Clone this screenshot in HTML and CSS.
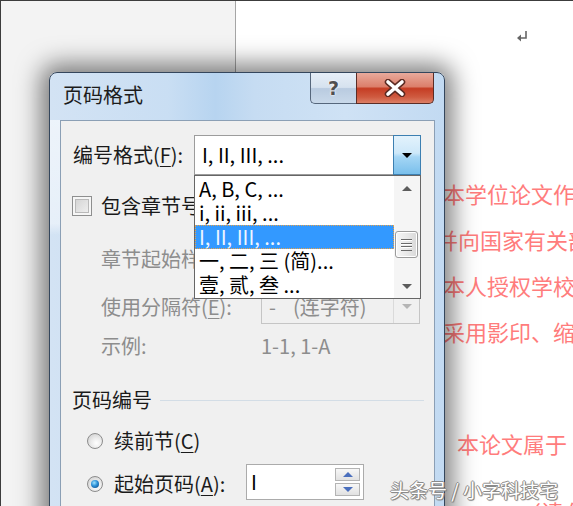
FILE: index.html
```html
<!DOCTYPE html>
<html lang="zh-CN">
<head>
  <meta charset="UTF-8" />
  <meta name="viewport" content="width=device-width, initial-scale=1.0"/>
  <title>页码格式</title>
  <link rel="stylesheet" href="styles.css">
</head>
<body>
  <div class="screen">
    <div class="gutter"></div>
    <div class="page">
      <div class="para-mark">
        <svg width="12" height="12" viewBox="0 0 12 12">
          <path d="M10 1 V8 H4" fill="none" stroke="#666" stroke-width="1.6"/>
          <path d="M1 8 L5 4.5 L5 11.5 Z" fill="#666"/>
        </svg>
      </div>
      <div class="red-text">
        <p class="line">本学位论文作者完全了解</p>
        <p class="line shift">保留并向国家有关部门</p>
        <p class="line">本人授权学校可以将本</p>
        <p class="line">采用影印、缩印或扫描</p>
        <p class="line indent">本论文属于</p>
        <p class="line late">（请在以上方框内打“√”）</p>
      </div>
    </div>

    <div class="dialog">
      <div class="titlebar">
        <span class="title">页码格式</span>
        <div class="caption-btns">
          <span class="cap-help">?</span>
          <span class="cap-close">
            <svg width="24" height="18" viewBox="0 0 24 18">
              <path d="M5 3 L19 15 M19 3 L5 15" stroke="#5a2a22" stroke-width="6.5" stroke-linecap="round"/>
              <path d="M5 3 L19 15 M19 3 L5 15" stroke="#fff" stroke-width="3.6" stroke-linecap="round"/>
            </svg>
          </span>
        </div>
      </div>

      <div class="client">
        <div class="row-format">
          <span class="format-label">编号格式(<u>F</u>):</span>
          <div class="combo">
            <div class="combo-value">I, II, III, ...</div>
            <div class="combo-btn"><span class="tri-down"></span></div>
            <div class="combo-list">
              <ul class="list-items">
                <li>A, B, C, ...</li>
                <li>i, ii, iii, ...</li>
                <li class="selected">I, II, III, ...</li>
                <li>一, 二, 三 (简)...</li>
                <li>壹, 贰, 叁 ...</li>
              </ul>
              <div class="scrollbar">
                <div class="scroll-btn"><span class="tri-up small"></span></div>
                <div class="thumb"><span class="grip"></span></div>
                <div class="scroll-btn end"><span class="tri-down small grey"></span></div>
              </div>
            </div>
          </div>
        </div>

        <div class="row-check">
          <span class="checkbox"></span>
          <span>包含章节号(<u>N</u>)</span>
        </div>

        <div class="sub-row chapter">
          <span class="sub-label">章节起始样式(<u>P</u>):</span>
          <div class="select-off">
            <span class="select-text">标题 1</span>
            <span class="select-btn"><span class="tri-down off"></span></span>
          </div>
        </div>
        <div class="sub-row separator">
          <span class="sub-label">使用分隔符(<u>E</u>):</span>
          <div class="select-off">
            <span class="select-text"><span class="dash">-</span>(连字符)</span>
            <span class="select-btn"><span class="tri-down off"></span></span>
          </div>
        </div>
        <div class="sub-row example">
          <span class="sub-label">示例:</span>
          <span>1-1, 1-A</span>
        </div>

        <div class="section">
          <span>页码编号</span>
          <span class="section-line"></span>
        </div>

        <div class="radio-row first">
          <span class="choice"><span class="radio"></span><span>续前节(<u>C</u>)</span></span>
        </div>
        <div class="radio-row second">
          <span class="choice"><span class="radio checked"></span><span>起始页码(<u>A</u>):</span></span>
          <div class="spin">
            <span class="spin-value">I</span>
            <div class="spin-btns">
              <span class="spin-btn"><span class="tri-up blue"></span></span>
              <span class="spin-btn"><span class="tri-down blue"></span></span>
            </div>
          </div>
        </div>
      </div>
    </div>

    <div class="watermark">头条号 / 小字科技宅</div>
  </div>
</body>
</html>
```

FILE: styles.css
```css
body {
  margin: 0;
  font-family: "Noto Sans CJK SC", "Noto Sans", sans-serif;
  background-color: #fff;
}
.screen {
  position: relative;
  width: 573px;
  height: 506px;
  overflow: hidden;
  display: flex;
  box-sizing: border-box;
  border-top: 1px solid #3c3c3c;
  border-left: 1px solid #3c3c3c;
  background-color: #fff;
}
.gutter {
  flex: none;
  width: 234px;
  background-color: #f3f3f3;
  border-right: 1px solid #a5a5a5;
}
.page {
  flex: 1;
  min-width: 0;
  background-color: #fff;
}
.para-mark {
  margin: 29px 0 0 280px;
  height: 12px;
}
.para-mark svg {
  display: block;
}
.red-text {
  margin-top: 128px;
  padding-left: 207px;
  color: #ff7c7c;
  font-size: 22px;
  line-height: 46px;
  white-space: nowrap;
}
.line {
  margin: 0;
}
.line.shift {
  margin-left: -51px;
}
.line.indent {
  margin-top: 66px;
  padding-left: 14px;
}
.line.late {
  margin-top: 22px;
  padding-left: 76px;
}

/* dialog window */
.dialog {
  position: absolute;
  left: 48px;
  top: 71px;
  width: 396px;
  height: 470px;
  box-sizing: border-box;
  border: 1px solid #34465c;
  border-radius: 8px 8px 0 0;
  background: linear-gradient(to right, #d3e3f4 0%, #c9def3 30%, #b7d4f0 42%, #c6dcf2 52%, #cfe2f5 75%, #c2daf2 100%);
  box-shadow: 0 0 24px 8px rgba(0, 0, 0, 0.5);
  display: flex;
  flex-direction: column;
}
.dialog::before {
  content: "";
  position: absolute;
  left: 0;
  top: 47px;
  width: 10px;
  height: 115px;
  background: linear-gradient(to bottom, rgba(255,255,255,0.6), rgba(255,255,255,0.45) 90%, rgba(255,255,255,0));
}
.titlebar {
  height: 47px;
  flex: none;
  display: flex;
  align-items: center;
  padding-left: 13px;
}
.title {
  font-size: 20px;
  color: #1c1c1c;
  line-height: 26px;
  margin-top: -4px;
}
.caption-btns {
  position: absolute;
  top: 0;
  right: 10px;
  display: flex;
  height: 31px;
}
.cap-help, .cap-close {
  display: flex;
  align-items: center;
  justify-content: center;
  box-sizing: border-box;
  height: 31px;
  border: 1px solid #56677c;
  border-top: none;
}
.cap-help {
  width: 46px;
  border-right: none;
  border-radius: 0 0 0 5px;
  background: linear-gradient(to bottom, #e6eef7 0%, #d6e2ef 48%, #b9cbe0 52%, #c9d9ea 100%);
  font-family: "DejaVu Sans", sans-serif;
  font-weight: bold;
  font-size: 19px;
  color: #505050;
  text-shadow: 0 0 2px #fff, 0 0 2px #fff;
}
.cap-close {
  width: 78px;
  border-color: #5b2d26;
  border-radius: 0 0 5px 0;
  background: linear-gradient(to bottom, #e8aa9c 0%, #dc7f6b 45%, #c53d24 52%, #cf5a40 80%, #dc7f66 100%);
}

.client {
  flex: 1;
  margin: 0 9px 0 10px;
  border: 1px solid #8b9fb5;
  background-color: #f0f0f0;
  padding: 14px 12px 0 11px;
  font-size: 20px;
  color: #1a1a1a;
}
.client u {
  text-decoration-thickness: 1px;
  text-underline-offset: 3px;
}
.row-format {
  display: flex;
  align-items: center;
  height: 40px;
}
.format-label {
  width: 121px;
  padding-left: 1px;
  line-height: 26px;
}
.combo {
  position: relative;
  display: flex;
  width: 227px;
  height: 40px;
}
.combo-value {
  flex: 1;
  box-sizing: border-box;
  border: 1px solid #9c9c9c;
  border-right: none;
  background-color: #fff;
  padding-left: 7px;
  line-height: 38px;
  color: #000;
}
.combo-btn {
  width: 28px;
  box-sizing: border-box;
  border: 1px solid #3c7fb1;
  background: linear-gradient(to bottom, #e3f2fc 0%, #cde8f9 45%, #a5d6f5 55%, #79bfeb 100%);
  display: flex;
  align-items: center;
  justify-content: center;
}
.tri-down, .tri-up {
  width: 0;
  height: 0;
  border-left: 5px solid transparent;
  border-right: 5px solid transparent;
}
.tri-down {
  border-top: 5px solid #000;
}
.tri-up {
  border-bottom: 5px solid #000;
}
.tri-up.small {
  border-bottom-color: #5c5c5c;
}
.tri-down.grey {
  border-top-color: #5c5c5c;
}
.tri-down.off {
  border-top-color: #b5b5b5;
}
.tri-up.blue {
  border-bottom-color: #4a6fbd;
}
.tri-down.blue {
  border-top-color: #4a6fbd;
}

.combo-list {
  position: absolute;
  top: 100%;
  left: 0;
  width: 227px;
  height: 124px;
  box-sizing: border-box;
  border: 1px solid #666;
  background-color: #fff;
  display: flex;
  z-index: 2;
}
.list-items {
  flex: 1;
  list-style: none;
  margin: 0;
  padding: 1px 0 0;
}
.list-items li {
  height: 24px;
  line-height: 24px;
  padding-left: 4px;
  color: #000;
  white-space: nowrap;
}
.list-items li.selected {
  background-color: #3399ff;
  color: #eef6ff;
  outline: 1px dotted #e6a24a;
  outline-offset: -1px;
}
.scrollbar {
  width: 26px;
  background-color: #f5f5f5;
  display: flex;
  flex-direction: column;
}
.scroll-btn {
  height: 24px;
  display: flex;
  align-items: center;
  justify-content: center;
}
.scroll-btn.end {
  margin-top: auto;
}
.thumb {
  margin: 31px 2px 0 1px;
  height: 27px;
  box-sizing: border-box;
  border: 1px solid #9b9b9b;
  border-radius: 3px;
  background: linear-gradient(to right, #f6f6f6, #e6e6e6 60%, #d8d8d8);
  box-shadow: inset 0 0 0 1px #fff;
  display: flex;
  align-items: center;
  justify-content: center;
}
.grip {
  width: 11px;
  height: 12px;
  background: repeating-linear-gradient(to bottom, #6a6a6a 0, #6a6a6a 1px, #fff 1px, #fff 2px, transparent 2px, transparent 3.5px);
}

.row-check {
  margin-top: 21px;
  height: 20px;
  display: flex;
  align-items: center;
  gap: 9px;
  line-height: 26px;
}
.checkbox {
  width: 20px;
  height: 20px;
  box-sizing: border-box;
  border: 1px solid #8e8f8f;
  background: linear-gradient(135deg, #cfcfcf, #f4f4f4);
  box-shadow: inset 0 0 0 2px #f6f6f6, inset 0 0 0 3px #b9b9b9;
}

.sub-row {
  display: flex;
  align-items: center;
  padding-left: 29px;
  color: #8d8d8d;
  line-height: 26px;
}
.sub-label {
  width: 160px;
}
.sub-row.chapter {
  margin-top: 25px;
  height: 35px;
}
.sub-row.separator {
  margin-top: 13px;
  height: 35px;
}
.sub-row.example {
  margin-top: 10px;
  height: 24px;
}
.select-off {
  width: 159px;
  height: 35px;
  box-sizing: border-box;
  border: 1px solid #c5c5c5;
  display: flex;
}
.select-text {
  flex: 1;
  padding-left: 7px;
  line-height: 33px;
  white-space: nowrap;
}
.dash {
  display: inline-block;
  width: 24px;
}
.select-btn {
  width: 25px;
  border-left: 1px solid #dadada;
  display: flex;
  align-items: center;
  justify-content: center;
}

.section {
  margin-top: 29px;
  height: 26px;
  margin-right: -2px;
  display: flex;
  align-items: center;
  gap: 8px;
  line-height: 26px;
}
.section-line {
  flex: 1;
  height: 1px;
  background-color: #d3dde6;
}

.radio-row {
  display: flex;
  padding-left: 15px;
}
.radio-row.first {
  margin-top: 18px;
  height: 20px;
  align-items: center;
}
.radio-row.second {
  margin-top: 13px;
  height: 36px;
  align-items: flex-start;
}
.choice {
  width: 159px;
  display: flex;
  align-items: center;
  gap: 11px;
  line-height: 26px;
  white-space: nowrap;
}
.radio-row.second .choice {
  margin-top: 7px;
}
.radio {
  flex: none;
  width: 16px;
  height: 16px;
  box-sizing: border-box;
  border-radius: 50%;
  border: 1px solid #8c8c8c;
  background: radial-gradient(circle at 60% 65%, #ffffff 0, #ececec 40%, #c9c9c9 100%);
  display: flex;
  align-items: center;
  justify-content: center;
}
.radio.checked::after {
  content: "";
  width: 8px;
  height: 8px;
  border-radius: 50%;
  background: radial-gradient(circle at 40% 35%, #9fe3ff 0, #2b8fd6 45%, #0c3f78 100%);
}
.spin {
  width: 118px;
  height: 36px;
  box-sizing: border-box;
  border: 1px solid #ababab;
  background-color: #fff;
  display: flex;
  align-items: center;
}
.spin-value {
  flex: 1;
  padding-left: 4px;
  color: #000;
  line-height: 26px;
}
.spin-btns {
  display: flex;
  flex-direction: column;
  gap: 2px;
  margin-right: 3px;
}
.spin-btn {
  width: 25px;
  height: 13px;
  box-sizing: border-box;
  border: 1px solid #b4b4b4;
  background: linear-gradient(to bottom, #f7f7f7, #e1e1e1);
  display: flex;
  align-items: center;
  justify-content: center;
}

.watermark {
  position: absolute;
  left: 389px;
  top: 476px;
  font-size: 19px;
  line-height: 26px;
  color: #fff;
  white-space: nowrap;
  text-shadow: 1px 0 0 #8a8a8a, -1px 0 0 #8a8a8a, 0 1px 0 #8a8a8a, 0 -1px 0 #8a8a8a, 1px 1px 1px #777;
  z-index: 3;
}
```
